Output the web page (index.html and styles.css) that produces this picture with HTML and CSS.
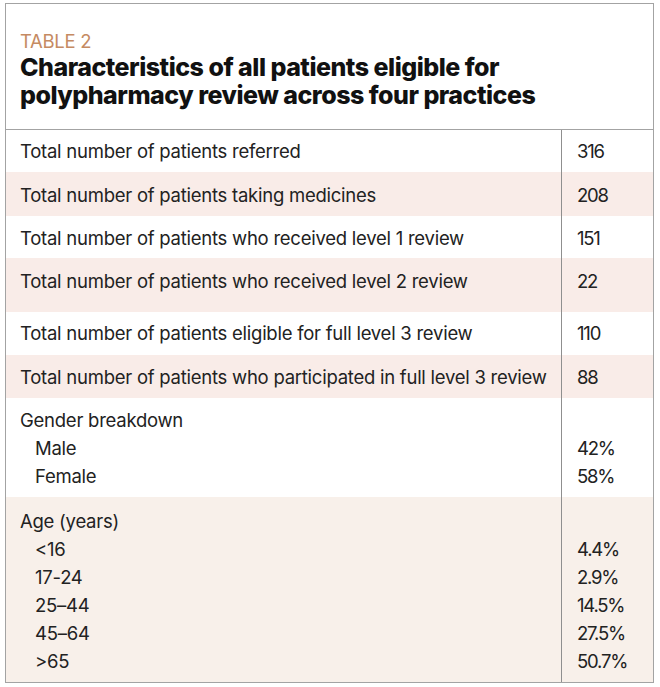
FILE: index.html
```html
<!DOCTYPE html>
<html lang="en">
<head>
<meta charset="utf-8">
<title>Table 2</title>
<link rel="stylesheet" href="styles.css">
</head>
<body>
<div class="card">
  <header class="head">
    <div class="label">TABLE 2</div>
    <h1 class="title">Characteristics of all patients eligible for polypharmacy review across four practices</h1>
  </header>
  <div class="rows">
    <div class="row r1"><div class="name">Total number of patients referred</div><div class="val">316</div></div>
    <div class="row r2 tint"><div class="name">Total number of patients taking medicines</div><div class="val">208</div></div>
    <div class="row r3"><div class="name">Total number of patients who received level 1 review</div><div class="val">151</div></div>
    <div class="row r4 tint"><div class="name">Total number of patients who received level 2 review</div><div class="val">22</div></div>
    <div class="row r5"><div class="name">Total number of patients eligible for full level 3 review</div><div class="val">110</div></div>
    <div class="row r6 tint"><div class="name">Total number of patients who participated in full level 3 review</div><div class="val">88</div></div>
    <div class="row group gender">
      <div class="name"><div>Gender breakdown</div><div class="sub">Male</div><div class="sub">Female</div></div>
      <div class="val"><div>&nbsp;</div><div>42%</div><div>58%</div></div>
    </div>
    <div class="row group age beige">
      <div class="name"><div>Age (years)</div><div class="sub">&lt;16</div><div class="sub">17-24</div><div class="sub">25–44</div><div class="sub">45–64</div><div class="sub">&gt;65</div></div>
      <div class="val"><div>&nbsp;</div><div>4.4%</div><div>2.9%</div><div>14.5%</div><div>27.5%</div><div>50.7%</div></div>
    </div>
  </div>
</div>
</body>
</html>
```
FILE: styles.css
```css
* { box-sizing: border-box; }
html, body { margin: 0; padding: 0; background: #ffffff; }
body {
  font-family: Inter, "Liberation Sans", Arial, sans-serif;
  color: #222222;
  padding: 3px 0 0 5px;
}
.card {
  width: 649px;
  border: 1px solid #a3a3a3;
  background: #ffffff;
}
.head {
  height: 126px;
  padding: 27px 16px 0 14px;
  border-bottom: 1px solid #a3a3a3;
}
.label {
  font-size: 18.5px;
  line-height: 20px;
  color: #c58a62;
  letter-spacing: -0.3px;
  font-weight: 400;
}
.title {
  margin: 2px 0 0 0;
  font-size: 25px;
  line-height: 28px;
  font-weight: 800;
  letter-spacing: -0.5px;
  color: #111111;
  width: 560px;
}
.rows { display: flex; flex-direction: column; }
.row {
  display: grid;
  grid-template-columns: 1fr 91px;
  font-size: 18.5px;
  line-height: 28px;
  letter-spacing: -0.25px;
}
.row .name { padding: 7px 0 7px 14px; border-right: 1px solid #8f8f8f; }
.row .val { padding: 7px 0 7px 15px; letter-spacing: -1.2px; }
.tint { background: #f9ece8; }
.beige { background: #f8f0ea; }
.r2 .name, .r2 .val { padding-top: 9px; padding-bottom: 7px; }
.r3 .name, .r3 .val { padding-top: 8px; padding-bottom: 6px; }
.r4 .name, .r4 .val { padding-top: 9px; padding-bottom: 17px; }
.r5 .name, .r5 .val { padding-top: 7px; padding-bottom: 8px; }
.r6 .name, .r6 .val { padding-top: 8px; padding-bottom: 7px; }
.gender .name, .gender .val { padding-top: 8px; padding-bottom: 7px; }
.age .name, .age .val { padding-top: 10px; padding-bottom: 7px; }
.sub { padding-left: 15px; }
```
